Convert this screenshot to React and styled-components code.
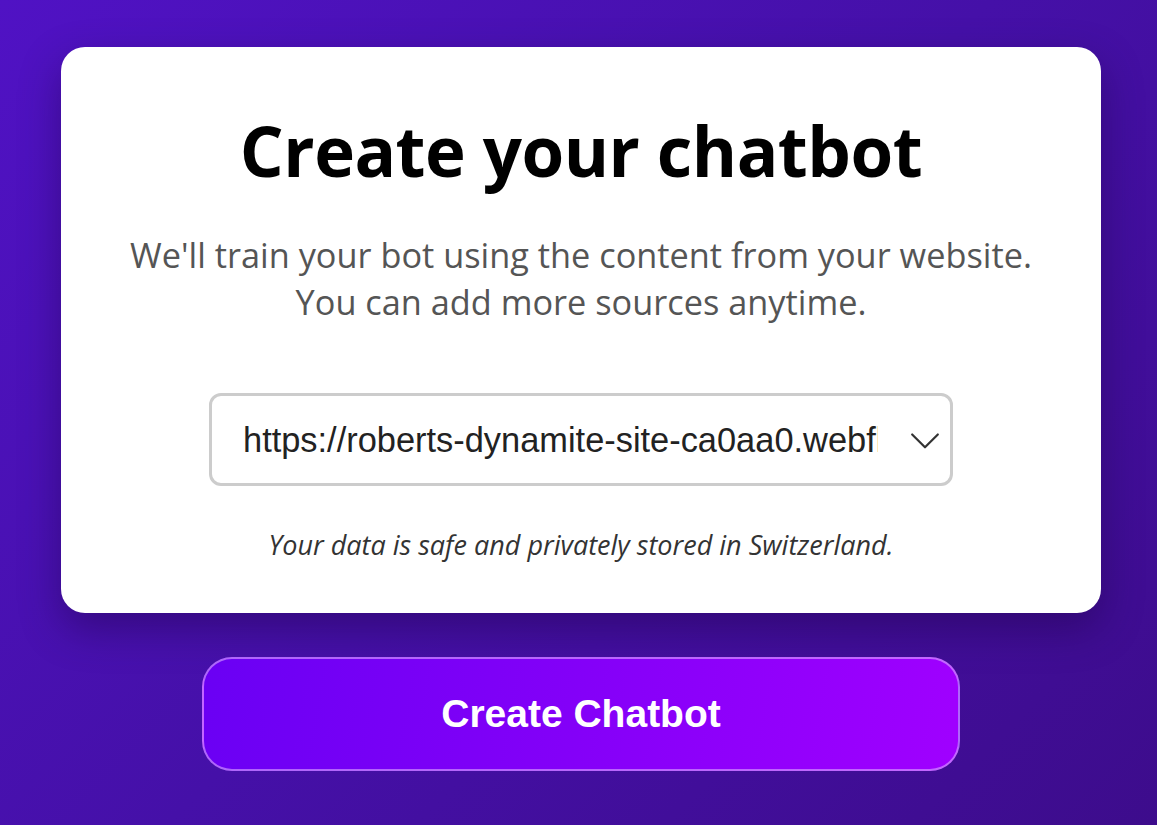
import React, { useState } from "react";
import styled, { createGlobalStyle } from "styled-components";

const GlobalStyle = createGlobalStyle`
  html, body {
    margin: 0;
    padding: 0;
    height: 100%;
  }
  body {
    font-family: "Open Sans", "Noto Sans", sans-serif;
  }
  #root {
    min-height: 100%;
  }
`;

const Page = styled.div`
  min-height: 825px;
  box-sizing: border-box;
  background: linear-gradient(135deg, #5012c4 0%, #4510a8 50%, #3d0c8c 100%);
  display: flex;
  flex-direction: column;
  align-items: center;
  padding: 47px 56px 0 61px;
  gap: 44px;
`;

const Card = styled.div`
  width: 1040px;
  height: 566px;
  box-sizing: border-box;
  background: #fff;
  border-radius: 24px;
  box-shadow: 0 16px 40px rgba(30, 0, 70, 0.45);
  display: flex;
  flex-direction: column;
  align-items: center;
  padding-top: 58px;
`;

const Title = styled.h1`
  margin: 0;
  font-family: "Open Sans", "Noto Sans", sans-serif;
  font-weight: 700;
  font-size: 69px;
  line-height: 90px;
  letter-spacing: -0.5px;
  color: #000;
`;

const Lead = styled.p`
  margin: 36px 0 0;
  font-family: "Open Sans", "Noto Sans", sans-serif;
  font-size: 34.3px;
  line-height: 47px;
  color: #555;
  text-align: center;
`;

const SelectWrap = styled.div`
  position: relative;
  margin-top: 68px;
  width: 744px;
  height: 93px;
`;

const UrlSelect = styled.select`
  appearance: none;
  -webkit-appearance: none;
  width: 100%;
  height: 100%;
  box-sizing: border-box;
  border: 3px solid #ccc;
  border-radius: 12px;
  background: #fff;
  padding: 0 72px 0 31px;
  font-family: "Liberation Sans", Arial, sans-serif;
  font-size: 34.4px;
  color: #222;
  outline: none;
`;

const Chevron = styled.svg`
  position: absolute;
  right: 6px;
  top: 50%;
  transform: translateY(-50%);
  pointer-events: none;
`;

const Note = styled.p`
  margin: 40px 0 0;
  font-family: "Open Sans", "Noto Sans", sans-serif;
  font-style: italic;
  font-size: 27px;
  color: #333;
`;

const Button = styled.button`
  width: 758px;
  height: 114px;
  border-radius: 30px;
  border: 2px solid rgba(220, 170, 255, 0.6);
  background: linear-gradient(100deg, #6a00f4 0%, #8400f8 50%, #a000ff 100%);
  color: #fff;
  font-family: "Liberation Sans", Arial, sans-serif;
  font-weight: 700;
  font-size: 39px;
  cursor: pointer;
`;

export default function App() {
  const [url, setUrl] = useState("https://roberts-dynamite-site-ca0aa0.webflow.io");

  return (
    <>
      <GlobalStyle />
      <Page>
        <Card>
          <Title>Create your chatbot</Title>
          <Lead>
            We'll train your bot using the content from your website.
            <br />
            You can add more sources anytime.
          </Lead>
          <SelectWrap>
            <UrlSelect value={url} onChange={(e) => setUrl(e.target.value)}>
              <option value="https://roberts-dynamite-site-ca0aa0.webflow.io">
                https://roberts-dynamite-site-ca0aa0.webflow.io
              </option>
            </UrlSelect>
            <Chevron width="44" height="44" viewBox="0 0 24 24" fill="none" stroke="#333" strokeWidth="1.2" strokeLinecap="round" strokeLinejoin="round">
              <path d="M5 9l7 7 7-7" />
            </Chevron>
          </SelectWrap>
          <Note>Your data is safe and privately stored in Switzerland.</Note>
        </Card>
        <Button>Create Chatbot</Button>
      </Page>
    </>
  );
}
